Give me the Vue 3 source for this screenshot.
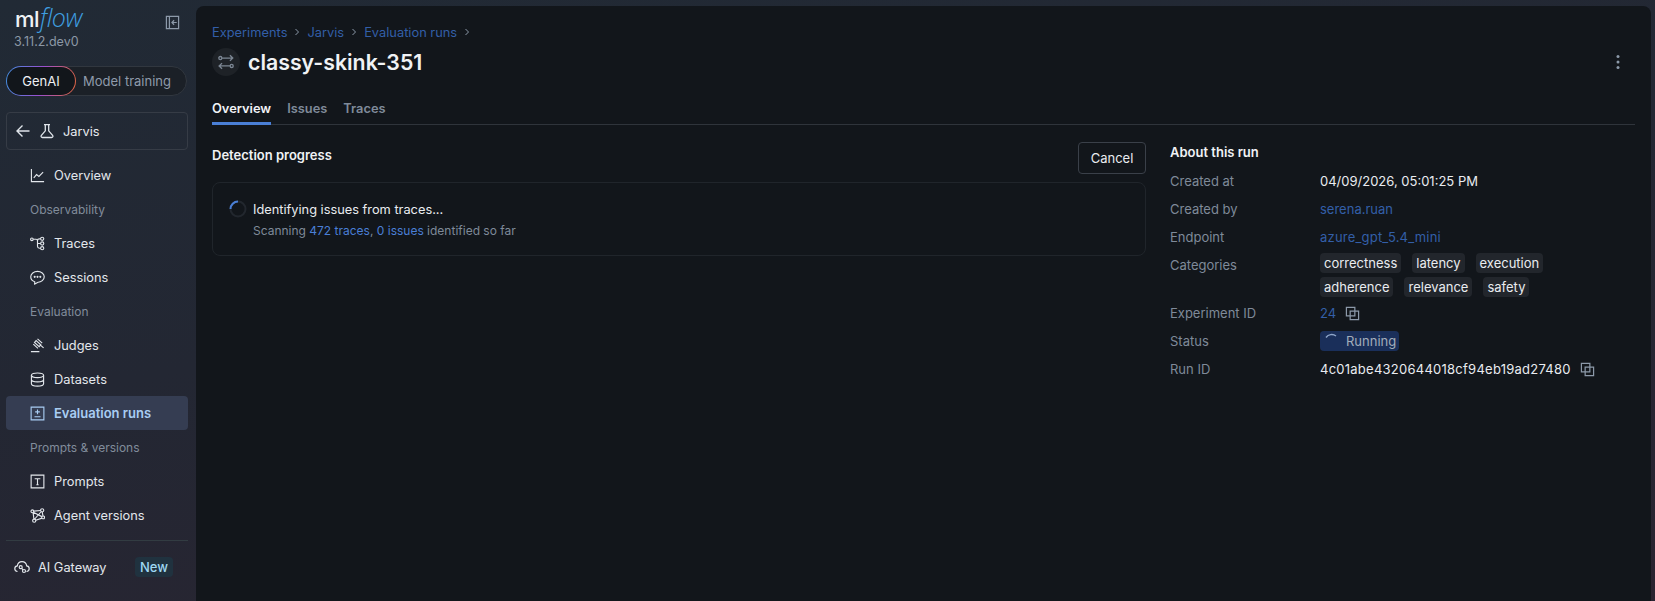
<template>
  <div class="page">
    <aside class="sidebar">
      <div class="logo-row">
        <div class="logo"><span class="logo-ml">ml</span><span class="logo-flow">flow</span></div>
        <svg class="collapse" viewBox="0 0 16 16" fill="none" stroke="#8c99a9" stroke-width="1.3">
          <path d="M1.500 1.500h13v13h-13zM4.700 1.500v13" />
          <path d="M12.500 8H7.500M9.700 5.600 7.400 8l2.300 2.400" />
        </svg>
      </div>
      <div class="version">3.11.2.dev0</div>

      <div class="switch">
        <div class="switch-on">GenAI</div>
        <div class="switch-off">Model training</div>
      </div>

      <div class="back-box">
        <svg class="icon" viewBox="0 0 16 16" fill="none" stroke="#dfe4ea" stroke-width="1.4">
          <path d="M14.500 8H2M7.500 2.500 2 8l5.500 5.500" />
        </svg>
        <svg class="icon" viewBox="0 0 16 16" fill="none" stroke="#dfe4ea" stroke-width="1.3">
          <path d="M5 1.600h6M6.300 1.600v6.200L2.400 12.400c-.8 1-.2 2.100 1 2.100h9.200c1.200 0 1.800-1.100 1-2.100L9.700 7.800V1.600" />
        </svg>
        <span class="nudge">Jarvis</span>
      </div>

      <template v-for="item in navItems" :key="item.label">
        <div v-if="item.section" class="nav-section">{{ item.label }}</div>
        <div v-else class="nav-item" :class="{ active: item.active }">
          <svg class="icon" viewBox="0 0 16 16" fill="none" stroke="currentColor" stroke-width="1.2" v-html="item.icon"></svg>
          <span class="nudge">{{ item.label }}</span>
        </div>
      </template>

      <div class="divider"></div>

      <div class="gateway">
        <svg class="icon" viewBox="0 0 16 16" fill="none" stroke="currentColor" stroke-width="1.2">
          <path d="M3.500 12.500C1.800 12.300.8 11.100.8 9.700c0-1.500 1.100-2.600 2.500-2.800C3.700 4.400 5.700 2.700 8 2.700s4.300 1.700 4.700 4.200c1.400.2 2.500 1.300 2.500 2.800 0 1.400-1 2.600-2.700 2.800" />
          <circle cx="6.700" cy="8.200" r="1.500" />
          <circle cx="10" cy="12" r="1.500" />
          <path d="M7.700 9.300 9 10.800" />
        </svg>
        <span class="nudge">AI Gateway</span>
        <span class="new-badge">New</span>
      </div>
    </aside>

    <main class="main">
      <div class="crumbs">
        <template v-for="c in crumbs" :key="c">
          <a class="link nudge">{{ c }}</a>
          <svg class="chev" viewBox="0 0 8 8" fill="none" stroke="#8c99a9" stroke-width="1"><path d="M2.500 1 5.500 4l-3 3" /></svg>
        </template>
      </div>

      <div class="title-row">
        <div class="avatar">
          <svg viewBox="0 0 16 16" width="18" height="18" fill="none" stroke="#7c8794" stroke-width="1.2">
            <path d="M14 4.500H4.300M1.600 4.500a1.350 1.350 0 1 0 2.700 0 1.350 1.350 0 1 0-2.700 0M1.900 11.500h9.800M14.400 11.500a1.350 1.350 0 1 1-2.700 0 1.350 1.350 0 1 1 2.700 0M11.500 2l2.500 2.500L11.500 7M4.500 9l-2.600 2.500L4.500 14" />
          </svg>
        </div>
        <h1>classy-skink-351</h1>
        <svg class="kebab" viewBox="0 0 4 16" width="4" height="16" fill="#8c99a9">
          <circle cx="2" cy="2.500" r="1.500" /><circle cx="2" cy="8" r="1.500" /><circle cx="2" cy="13.500" r="1.500" />
        </svg>
      </div>

      <div class="tabs">
        <div class="tab selected">Overview</div>
        <div class="tab">Issues</div>
        <div class="tab">Traces</div>
      </div>

      <div class="columns">
        <section class="left">
          <div class="left-head">
            <h2>Detection progress</h2>
            <button type="button" class="cancel">Cancel</button>
          </div>
          <div class="progress-card">
            <svg class="spin" viewBox="0 0 18 18" width="18" height="18" fill="none" stroke-width="2">
              <circle cx="9" cy="9" r="7.500" stroke="#22272e" />
              <path d="M1.500 9A7.500 7.500 0 0 1 9 1.500" stroke="#4a7fd6" />
            </svg>
            <div>
              <div class="progress-title">Identifying issues from traces...</div>
              <div class="progress-sub">Scanning <span class="bright">472 traces</span>, <span class="bright">0 issues</span> identified so far</div>
            </div>
          </div>
        </section>

        <section class="about">
          <h2>About this run</h2>
          <div class="info-row">
            <div class="info-label">Created at</div>
            <div>04/09/2026, 05:01:25 PM</div>
          </div>
          <div class="info-row">
            <div class="info-label">Created by</div>
            <a class="link">serena.ruan</a>
          </div>
          <div class="info-row">
            <div class="info-label">Endpoint</div>
            <a class="link endpoint">azure_gpt_5.4_mini</a>
          </div>
          <div class="info-row tags-row">
            <div class="info-label">Categories</div>
            <div class="tags">
              <span v-for="t in categories" :key="t" class="tag">{{ t }}</span>
            </div>
          </div>
          <div class="info-row">
            <div class="info-label">Experiment ID</div>
            <a class="link">24</a>
            <svg class="copy" viewBox="0 0 16 16" fill="none" stroke="#8c99a9" stroke-width="1.3"><path d="M1.500 1.500h9v9h-9zM5.500 5.500h9v9h-9z" /></svg>
          </div>
          <div class="info-row">
            <div class="info-label">Status</div>
            <span class="status">
              <svg viewBox="0 0 16 16" width="16" height="16" fill="none" stroke="#8fa6c9" stroke-width="1.400"><path d="M2 4.500A7 7 0 0 1 12 3" /></svg>
              Running
            </span>
          </div>
          <div class="info-row">
            <div class="info-label">Run ID</div>
            <div class="run-id">4c01abe4320644018cf94eb19ad27480</div>
            <svg class="copy" viewBox="0 0 16 16" fill="none" stroke="#8c99a9" stroke-width="1.3"><path d="M1.500 1.500h9v9h-9zM5.500 5.500h9v9h-9z" /></svg>
          </div>
        </section>
      </div>
    </main>
  </div>
</template>

<script setup>
const crumbs = ['Experiments', 'Jarvis', 'Evaluation runs']
const categories = ['correctness', 'latency', 'execution', 'adherence', 'relevance', 'safety']

const navItems = [
  { label: 'Overview', icon: '<path d="M1.500 1v13.500H15M4 10.500l3-3.500 2.500 2L14 4.500"/>' },
  { label: 'Observability', section: true },
  { label: 'Traces', icon: '<circle cx="2" cy="3.500" r="1.400"/><circle cx="13" cy="3" r="1.700"/><circle cx="13" cy="8" r="1.700"/><circle cx="13" cy="13" r="1.700"/><path d="M3.400 3.500h3.100c1 0 1.500.6 1.500 1.500v6c0 1.200.8 2 2 2h1.300M8 8h3.300M8 5c0-1.200.6-2 2-2h1.300"/>' },
  { label: 'Sessions', icon: '<path d="M8 1.500c3.900 0 7.200 2.500 7.200 5.800S11.900 13 8.600 13L5 15v-2.500C2.300 11.700.8 9.700.8 7.300.8 4 4.100 1.500 8 1.500z"/><circle cx="5" cy="7.300" r=".5" fill="currentColor"/><circle cx="8" cy="7.300" r=".5" fill="currentColor"/><circle cx="11" cy="7.300" r=".5" fill="currentColor"/>' },
  { label: 'Evaluation', section: true },
  { label: 'Judges', icon: '<path d="M1 14.500h9M8 1l5 4.500M3.500 6.500l5 4.500M6.500 2.800 4.800 4.700l5 4.500 1.700-1.900zM10.500 7l4 3.500"/>' },
  { label: 'Datasets', icon: '<ellipse cx="8" cy="3.500" rx="6.500" ry="2.500"/><path d="M1.500 3.500v9c0 1.400 2.900 2.500 6.500 2.500s6.500-1.100 6.500-2.500v-9M1.500 8c0 1.400 2.900 2.500 6.500 2.500s6.500-1.100 6.500-2.500"/>' },
  { label: 'Evaluation runs', active: true, icon: '<path d="M1.200 1.200h13.600v13.600H1.200zM4.800 11.500h6.400M8 3.800v5M5.500 6.300h5"/>' },
  { label: 'Prompts & versions', section: true },
  { label: 'Prompts', icon: '<path d="M1.200 1.200h13.600v13.600H1.200zM5 5h6M8 5v6.500M6.800 11.500h2.400"/>' },
  { label: 'Agent versions', icon: '<circle cx="2.500" cy="3.500" r="1.500"/><circle cx="13" cy="2.500" r="1.700"/><circle cx="4.500" cy="13.500" r="1.700"/><circle cx="14" cy="10" r="1.500"/><path d="M4 3.300l7.300-.7M3.300 5l.9 6.800M6.100 13l6.800-2.200M13 4.200l.8 4.300M3.500 4.500l9.200 4.700M4.800 12l7-8"/>' },
]
</script>

<style>
html, body {
  margin: 0;
  background: #232832;
}
</style>

<style scoped>
.page {
  display: flex;
  width: 1655px;
  height: 601px;
  overflow: hidden;
  font-family: Inter, "Noto Sans", sans-serif;
  font-size: 13px;
  line-height: 20px;
  color: #e9ecf0;
  background: linear-gradient(170deg, #212a35 0%, #232733 45%, #2a2431 100%);
}

.sidebar {
  width: 188px;
  flex: none;
  padding: 0 2px 0 6px;
  box-sizing: content-box;
}

.logo-row {
  display: flex;
  align-items: center;
  justify-content: space-between;
  height: 33px;
  padding: 0 1px 0 9px;
}

.logo {
  font-size: 22px;
  line-height: 28px;
  letter-spacing: -0.5px;
  margin-top: 3px;
}

.logo-ml {
  font-weight: 500;
  color: #eef1f4;
}

.logo-flow {
  font-family: "Open Sans", sans-serif;
  font-style: italic;
  font-weight: 300;
  font-size: 25px;
  line-height: 28px;
  color: #3f9fe0;
  margin-left: 1px;
}

.collapse {
  width: 15px;
  height: 15px;
  margin-top: 11px;
  margin-right: 13px;
}

.version {
  height: 20px;
  margin-top: -1px;
  margin-bottom: 14px;
  padding-left: 8px;
  font-size: 12.500px;
  color: #8c98a6;
}

.switch {
  display: flex;
  align-items: center;
  width: 181px;
  height: 30px;
  box-sizing: border-box;
  border: 1px solid #31373f;
  border-radius: 15px;
  background: #1b2027;
  padding-right: 8px;
}

.switch-on {
  flex: none;
  width: 70px;
  height: 30px;
  margin: -1px 0 -1px -1px;
  box-sizing: border-box;
  display: flex;
  align-items: center;
  justify-content: center;
  border: 1px solid transparent;
  border-radius: 15px;
  background:
    linear-gradient(#12161b, #12161b) padding-box,
    linear-gradient(100deg, #3f8fe0 0%, #9a4fd0 50%, #e0653c 100%) border-box;
  color: #eef1f4;
}

.switch-off {
  flex: 1;
  text-align: center;
  color: #8f9bab;
}

.back-box {
  display: flex;
  align-items: center;
  gap: 8px;
  width: 182px;
  height: 38px;
  box-sizing: border-box;
  margin-top: 16px;
  margin-bottom: 8px;
  padding-left: 8px;
  font-size: 12.800px;
  border: 1px solid #363c46;
  border-radius: 4px;
}

.nudge {
  padding-top: 2px;
}

.icon {
  width: 16px;
  height: 16px;
  flex: none;
}

.nav-section {
  height: 34px;
  width: 182px;
  padding-left: 24px;
  padding-top: 1px;
  box-sizing: border-box;
  display: flex;
  align-items: center;
  font-size: 12px;
  color: #818c9b;
}

.nav-item {
  display: flex;
  align-items: center;
  gap: 9px;
  width: 182px;
  height: 34px;
  box-sizing: border-box;
  padding-left: 24px;
  border-radius: 4px;
  font-size: 12.800px;
  color: #e3e7ec;
}

.nav-item .icon {
  width: 15px;
  height: 15px;
}

.nav-item.active {
  background: #353d52;
  color: #a9cdf3;
  font-size: 13px;
  font-weight: 600;
}

.nav-item.active .nudge {
  padding-top: 0;
}

.divider {
  width: 182px;
  height: 1px;
  margin-top: 8px;
  background: #323c42;
}

.gateway {
  display: flex;
  align-items: center;
  width: 182px;
  height: 34px;
  box-sizing: border-box;
  margin-top: 9px;
  padding-left: 8px;
  gap: 8px;
  font-size: 12.800px;
  color: #e3e7ec;
}

.new-badge {
  margin-left: auto;
  margin-right: 15px;
  height: 20px;
  padding: 0 5px;
  border-radius: 4px;
  background: #20323f;
  color: #9fd8f2;
  font-size: 13px;
  font-weight: 500;
}

.main {
  flex: 1;
  margin: 6px 4px 0 0;
  padding: 16px 16px 0;
  box-sizing: border-box;
  min-width: 0;
  background: #12161b;
  border-radius: 8px 8px 0 0;
}

.crumbs {
  display: flex;
  align-items: center;
  height: 20px;
  font-size: 12.850px;
}

.link {
  color: #335fa8;
}

.endpoint {
  letter-spacing: 0.2px;
}

.chev {
  width: 8px;
  height: 8px;
  margin: 0 6px;
}

.title-row {
  display: flex;
  align-items: center;
  gap: 8px;
  height: 28px;
  margin-top: 6px;
}

.avatar {
  width: 28px;
  height: 28px;
  border-radius: 50%;
  background: #1e2227;
  display: flex;
  align-items: center;
  justify-content: center;
}

h1 {
  margin: 0;
  font-size: 21.300px;
  line-height: 28px;
  font-weight: 600;
  color: #f0f2f5;
}

.kebab {
  margin-left: auto;
  margin-right: 15px;
}

.tabs {
  display: flex;
  gap: 16px;
  height: 34px;
  margin-top: 15px;
  box-sizing: border-box;
  border-bottom: 1px solid #2f343b;
  font-size: 12.850px;
}

.tab {
  height: 34px;
  box-sizing: border-box;
  padding-top: 8px;
  font-weight: 600;
  color: #7f8a99;
}

.tab.selected {
  color: #f0f2f5;
  border-bottom: 3px solid #4a7fd6;
}

.columns {
  display: flex;
  gap: 24px;
  margin-top: 17px;
}

.left {
  width: 934px;
  flex: none;
}

.left-head {
  display: flex;
  justify-content: space-between;
  height: 40px;
}

h2 {
  margin: 0;
  font-size: 13px;
  line-height: 20px;
  font-weight: 600;
  color: #f0f2f5;
}

.left-head h2 {
  margin-top: 3px;
}

.cancel {
  width: 68px;
  height: 32px;
  margin: 0;
  padding: 0;
  font: inherit;
  color: #e9ecf0;
  background: transparent;
  border: 1px solid #3a4049;
  border-radius: 4px;
}

.progress-card {
  display: flex;
  gap: 6px;
  height: 74px;
  box-sizing: border-box;
  padding: 16px;
  border: 1px solid #20252b;
  border-radius: 8px;
}

.spin {
  flex: none;
  margin-top: 1px;
}

.progress-title {
  margin-top: 1px;
  font-size: 12.800px;
  color: #e9ecf0;
}

.progress-sub {
  font-size: 12px;
  line-height: 20px;
  margin-top: 1px;
  color: #7f8a99;
}

.bright {
  color: #4a7fd6;
}

.about {
  flex: 1;
  min-width: 0;
}

.about h2 {
  margin-top: 0;
  margin-bottom: 5px;
}

.info-row {
  display: flex;
  align-items: center;
  min-height: 28px;
}

.info-label {
  flex: none;
  width: 150px;
  color: #7f8a99;
}

.tags-row {
  align-items: flex-start;
}

.tags-row .info-label {
  padding-top: 4px;
}

.tags {
  display: flex;
  flex-wrap: wrap;
  width: 260px;
  gap: 4px 11px;
  padding: 2px 0 2px;
}

.tag {
  height: 20px;
  padding: 0 4px;
  border-radius: 4px;
  background: #22262c;
}

.run-id {
  letter-spacing: 0.25px;
}

.copy {
  width: 15px;
  height: 15px;
  margin-left: 9px;
}

.status {
  display: flex;
  align-items: center;
  gap: 6px;
  height: 20px;
  padding: 0 3px 0 4px;
  border-radius: 4px;
  background: #1a2f5a;
  color: #a2adbb;
}
</style>
